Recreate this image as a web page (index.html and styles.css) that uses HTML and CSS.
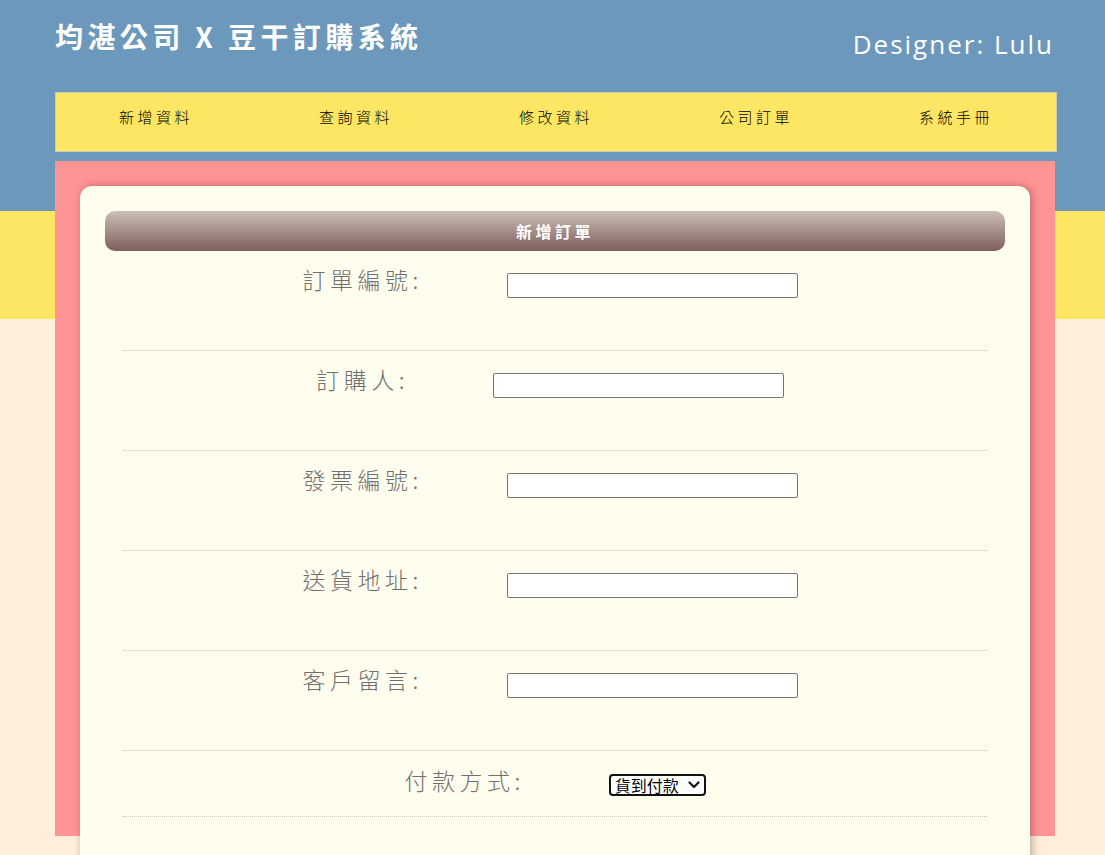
FILE: index.html
```html
<!DOCTYPE html>
<html lang="zh-Hant">
<head>
<meta charset="utf-8">
<title>均湛公司 X 豆干訂購系統</title>
<link rel="stylesheet" href="styles.css">
</head>
<body>
<div class="page">
  <header class="header">
    <h1 class="title">均湛公司 X 豆干訂購系統</h1>
    <p class="designer">Designer: Lulu</p>
  </header>
  <nav class="nav">
    <a class="nav-item" href="#">新增資料</a>
    <a class="nav-item" href="#">查詢資料</a>
    <a class="nav-item" href="#">修改資料</a>
    <a class="nav-item" href="#">公司訂單</a>
    <a class="nav-item" href="#">系統手冊</a>
  </nav>
  <main class="panel">
    <section class="card">
      <h2 class="card-head">新增訂單</h2>
      <form class="form">
        <div class="row">
          <label class="label">訂單編號:</label>
          <input class="field" type="text">
        </div>
        <div class="row">
          <label class="label">訂購人:</label>
          <input class="field" type="text">
        </div>
        <div class="row">
          <label class="label">發票編號:</label>
          <input class="field" type="text">
        </div>
        <div class="row">
          <label class="label">送貨地址:</label>
          <input class="field" type="text">
        </div>
        <div class="row">
          <label class="label">客戶留言:</label>
          <input class="field" type="text">
        </div>
        <div class="row row-short">
          <label class="label">付款方式:</label>
          <div class="select-wrap">
            <select class="select">
              <option>貨到付款</option>
              <option>信用卡</option>
              <option>ATM轉帳</option>
            </select>
            <svg class="chevron" width="12" height="8" viewBox="0 0 12 8" aria-hidden="true"><path d="M1.5 1.5 L6 6 L10.5 1.5" fill="none" stroke="#111" stroke-width="2.2" stroke-linecap="round" stroke-linejoin="round"/></svg>
          </div>
        </div>
      </form>
    </section>
  </main>
</div>
</body>
</html>
```
FILE: styles.css
```css
html, body {
  margin: 0;
  padding: 0;
}
body {
  min-height: 855px;
  background: linear-gradient(to bottom, #6c98bb 0, #6c98bb 211px, #fce663 211px, #fce663 319px, #feeedb 319px, #feeedb 100%);
  font-family: "Noto Sans CJK TC", "Noto Sans", sans-serif;
}
.page {
  margin-left: 55px;
  width: 1002px;
}
.header {
  display: flex;
  justify-content: space-between;
  align-items: flex-start;
  height: 92px;
}
.title {
  margin: 16px 0 0 0;
  font-size: 28px;
  font-weight: 700;
  letter-spacing: 4.4px;
  color: #ffffff;
  line-height: 40px;
}
.designer {
  margin: 26px 3px 0 0;
  font-family: "Open Sans", "Noto Sans", sans-serif;
  font-size: 26px;
  letter-spacing: 2px;
  color: #ffffff;
  line-height: 36px;
}
.nav {
  display: flex;
  height: 58px;
  border: 1px solid #cfcbb0;
  background: #fce663;
}
.nav-item {
  flex: 0 0 200px;
  display: flex;
  align-items: center;
  justify-content: center;
  padding-bottom: 11px;
  box-sizing: border-box;
  font-size: 15px;
  font-weight: 300;
  letter-spacing: 3.5px;
  color: #000;
  text-decoration: none;
}
.panel {
  margin-top: 9px;
  width: 1000px;
  height: 675px;
  box-sizing: border-box;
  padding: 25px 25px 0 25px;
  background: #ff9494;
}
.card {
  width: 950px;
  min-height: 700px;
  box-sizing: border-box;
  padding: 25px 25px 0 25px;
  background: #fffdee;
  border-radius: 12px;
  box-shadow: 2px 0 8px rgba(60, 30, 30, 0.35);
}
.card-head {
  margin: 0;
  height: 40px;
  border-radius: 10px;
  background: linear-gradient(to bottom, #cbc0b6, #7f5d5b);
  color: #ffffff;
  font-size: 16px;
  font-weight: 700;
  letter-spacing: 3.5px;
  line-height: 40px;
  text-align: center;
}
.form {
  margin: 0 18px;
}
.row {
  display: flex;
  justify-content: center;
  align-items: flex-start;
  gap: 84px;
  box-sizing: border-box;
  height: 100px;
  padding: 22px 10px 0 0;
  border-bottom: 1px dotted #c9c6b8;
}
.row-short {
  height: 66px;
  padding: 23px 0 0 0;
}
.label {
  margin-top: -10px;
  font-size: 23px;
  font-weight: 300;
  letter-spacing: 4.5px;
  line-height: 33px;
  color: #6f6f6f;
}
.field {
  width: 291px;
  height: 25px;
  box-sizing: border-box;
  margin: 0;
  border: 1px solid #767676;
  border-radius: 2px;
  background: #ffffff;
}
.select-wrap {
  position: relative;
  width: 97px;
  height: 22px;
}
.select {
  appearance: none;
  -webkit-appearance: none;
  display: block;
  width: 97px;
  height: 22px;
  box-sizing: border-box;
  margin: 0;
  padding: 0 18px 0 4px;
  border: 2px solid #111111;
  border-radius: 4px;
  background: #ffffff;
  color: #000;
  font-family: "Noto Sans CJK TC", sans-serif;
  font-size: 16px;
  line-height: 18px;
}
.chevron {
  position: absolute;
  right: 6px;
  top: 7px;
  pointer-events: none;
}
```
